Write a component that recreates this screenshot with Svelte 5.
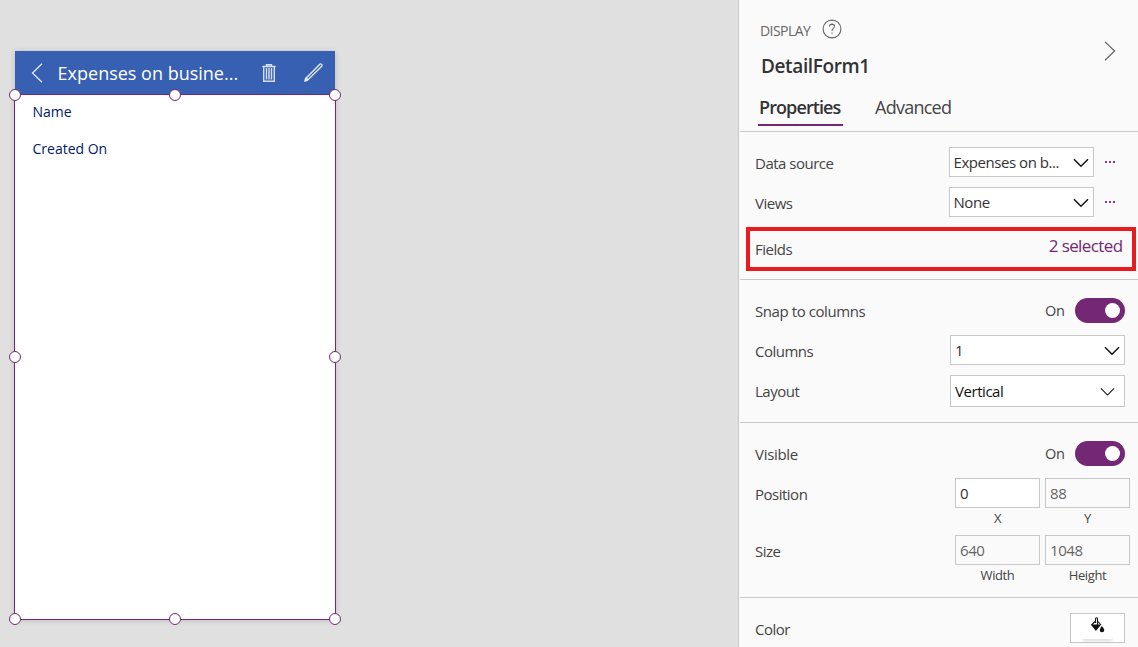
<script>
  const handles = ['tl', 'tc', 'tr', 'ml', 'mr', 'bl', 'bc', 'br'];
</script>

{#snippet chevron(kind)}
  <svg class="chev {kind}" width="16" height="10" viewBox="0 0 16 10"><path d="M1 1.2 8 8.2 15 1.2" /></svg>
{/snippet}

{#snippet toggle()}
  <div class="toggle-wrap"><span class="on">On</span><span class="toggle"><i></i></span></div>
{/snippet}

{#snippet field(value, caption, editable)}
  <div class="field">
    <div class="input" class:editable><span>{value}</span></div>
    <span class="caption">{caption}</span>
  </div>
{/snippet}

<div class="app">
  <main class="canvas">
    <div class="phone">
      <header class="bar">
        <svg class="back" width="12" height="20" viewBox="0 0 12 20"><path d="M11 .8 1.5 10 11 19.2" /></svg>
        <span class="title">Expenses on busine...</span>
        <svg class="trash" width="14" height="18" viewBox="0 0 14 18">
          <path d="M.3 2.5H13.7M4.5 2V.8H9.5V2" />
          <path d="M1.7 3V17.3H12.3V3" />
          <path class="thin" d="M4.5 4V15.5M7 4V15.5M9.5 4V15.5" />
        </svg>
        <svg class="pencil" width="19" height="19" viewBox="0 0 19 19">
          <path d="M.9 18.1 1.5 15.7 15.8 1.3Q16.7.5 17.6 1.4 18.5 2.3 17.7 3.2L3.3 17.5Z" />
          <path class="tip" d="M.9 18.1 1.5 15.7 2.7 14.5 4.5 16.3 3.3 17.5Z" />
        </svg>
      </header>
      <div class="form">
        <div class="card">Name</div>
        <div class="card">Created On</div>
        <div class="selection">
          {#each handles as h}<i class="handle {h}"></i>{/each}
        </div>
      </div>
    </div>
  </main>

  <aside class="panel">
    <div class="head">
      <div class="head-text">
        <div class="kind">
          <span class="display">DISPLAY</span>
          <svg width="20" height="20" viewBox="0 0 20 20">
            <circle cx="10" cy="10" r="8.9" />
            <path d="M7.5 7.4Q7.6 5.1 10 5.1 12.5 5.2 12.5 7.3 12.5 8.5 11.3 9.4 10 10.4 10 11.9" />
            <path d="M10 13.4V14.8" />
          </svg>
        </div>
        <div class="name">DetailForm1</div>
      </div>
      <svg class="expand" width="12" height="20" viewBox="0 0 12 20"><path d="M1 .9 10.6 10 1 19.3" /></svg>
    </div>
    <nav class="tabs">
      <span class="tab active">Properties</span>
      <span class="tab">Advanced</span>
    </nav>

    <section class="data">
      <div class="row">
        <span class="label">Data source</span>
        <div class="source"><div class="select"><span>Expenses on b...</span>{@render chevron('bold')}</div><span class="dots"><i></i><i></i><i></i></span></div>
      </div>
      <div class="row">
        <span class="label">Views</span>
        <div class="source"><div class="select"><span>None</span>{@render chevron('bold')}</div><span class="dots"><i></i><i></i><i></i></span></div>
      </div>
      <div class="fields">
        <span class="label">Fields</span>
        <span class="selected">2 selected</span>
      </div>
    </section>

    <section class="layout">
      <div class="row"><span class="label snap">Snap to columns</span>{@render toggle()}</div>
      <div class="row"><span class="label">Columns</span><div class="select wide"><span>1</span>{@render chevron('bold')}</div></div>
      <div class="row"><span class="label">Layout</span><div class="select wide tall"><span>Vertical</span>{@render chevron('light')}</div></div>
    </section>

    <section class="geometry">
      <div class="row"><span class="label visible">Visible</span>{@render toggle()}</div>
      <div class="row pair"><span class="label">Position</span><div class="fieldset">{@render field('0', 'X', true)}{@render field('88', 'Y', false)}</div></div>
      <div class="row pair"><span class="label">Size</span><div class="fieldset">{@render field('640', 'Width', false)}{@render field('1048', 'Height', false)}</div></div>
    </section>

    <section class="color">
      <div class="row">
        <span class="label">Color</span>
        <div class="swatch">
          <svg width="15" height="16" viewBox="0 0 15 16">
            <path class="line" d="M5.5 6V2.4Q5.5.8 6.8.8 7.5.8 7.5 2.4V8M5 4.5 1.5 8M8 4.5 11 8" />
            <path d="M.8 7.6H11.2L5.9 14ZM11.8 9Q14.3 11.6 14.3 13A2.3 2.3 0 0 1 9.7 13Q9.7 11.6 11.8 9Z" />
          </svg>
          <i></i>
        </div>
      </div>
    </section>
  </aside>
</div>

<style>
  :global(body) { overflow: hidden; }
  .app, .app * { box-sizing: border-box; }
  .app { display: flex; width: 1138px; height: 647px; overflow: hidden; background: #e0e0e0; font: 15px/20px "Open Sans", "Noto Sans", sans-serif; color: #444; white-space: nowrap; }
  svg { fill: none; display: block; flex: none; }
  .canvas { width: 738px; flex: none; padding: 51px 0 0 15px; }
  .phone { width: 320px; height: 568px; display: flex; flex-direction: column; background: #fff; box-shadow: 0 1px 6px rgba(0, 0, 0, .18); }
  .bar { height: 43px; flex: none; background: #3860b2; color: #fff; display: flex; align-items: center; padding: 1px 12px 0 16px; }
  .bar svg { stroke: #e7edf8; stroke-width: 1.2; }
  .title { font-size: 18px; line-height: 24px; width: 187.4px; margin-left: 14.6px; }
  .bar .trash { margin-left: 17px; stroke: #d5dff2; stroke-width: 1.4; }
  .bar .pencil { margin-left: auto; stroke-width: 1.3; margin-top: -1px; }
  .pencil .tip { fill: #e7edf8; stroke: none; }
  .form { position: relative; flex: 1; padding: 8px 17.5px; color: #002065; font-size: 14px; }
  .card { height: 37px; }
  .selection { position: absolute; inset: 0 -1px -1px; border: 1px solid #742774; }
  .handle { position: absolute; width: 12px; height: 12px; border: 1px solid #742774; border-radius: 50%; background: #fff; }
  .tl, .tc, .tr { top: -6px; }
  .bl, .bc, .br { bottom: -6px; }
  .ml, .mr { top: 256px; }
  .tl, .ml, .bl { left: -6px; }
  .tc, .bc { left: 154px; }
  .tr, .mr, .br { right: -6px; }

  .panel { width: 400px; flex: none; border-left: 1px solid #c8c8c8; padding-left: 1px; background: #fafafa; }
  .head { display: flex; justify-content: space-between; height: 84px; padding: 19px 22px 0 20px; }
  .kind { display: flex; align-items: center; gap: 11px; height: 21px; }
  .display { font-size: 14px; letter-spacing: -.55px; color: #666; width: 50px; padding-top: 2px; }
  .kind svg { stroke: #666; stroke-width: 1.1; margin: -1px 0 0 .5px; }
  .name { font-size: 19px; line-height: 26px; font-weight: 600; color: #333; margin: 13px 0 0 1px; letter-spacing: -.38px; }
  .expand { margin-top: 22px; stroke: #666; stroke-width: 1.3; }
  .tabs { height: 48px; border-bottom: 1px solid #c8c8c8; display: flex; gap: 32px; padding-left: 18px; font-size: 18px; line-height: 24px; }
  .tab { height: 42px; padding-top: 11px; letter-spacing: -.75px; }
  .active { width: 85px; padding-left: 1px; border-bottom: 2px solid #742774; font-weight: 600; color: #333; letter-spacing: -.9px; }
  section { border-bottom: 1px solid #c8c8c8; padding-left: 15px; }
  .row { display: flex; justify-content: space-between; align-items: center; height: 40px; }
  .label { padding-top: 2px; letter-spacing: -.5px; }
  .snap { letter-spacing: -.42px; }
  .visible { letter-spacing: -.3px; }
  .data { height: 148px; padding-top: 10px; }
  .source { display: flex; align-items: center; width: 189px; }
  .select { display: flex; align-items: center; justify-content: space-between; width: 145px; height: 30px; padding: 0 4.5px 0 3.5px; border: 1px solid #c8c8c8; background: #fff; color: #333; letter-spacing: -.45px; }
  .select.wide { width: 175px; margin-right: 13px; padding-left: 4px; }
  .select.tall { height: 32px; color: #111; padding-right: 9px; }
  .chev { stroke: #111; stroke-width: 1.5; margin-top: 1px; }
  .light { stroke-width: 1.1; width: 15px; }
  .dots { display: flex; gap: 2px; margin-left: 11px; }
  .dots i { width: 2px; height: 2px; background: #843a84; }
  .fields { display: flex; justify-content: space-between; width: 390px; height: 44px; margin: 5px 0 0 -9px; border: 4px solid #e81b1f; padding: 6px 9.5px 0 5px; }
  .selected { color: #742774; font-size: 17px; line-height: 18px; letter-spacing: -.6px; }
  .layout { height: 143px; padding-top: 10px; }
  .toggle-wrap { display: flex; align-items: center; margin-right: 13px; }
  .on { width: 30px; letter-spacing: -.3px; font-size: 14.5px; padding-top: 1px; }
  .toggle { width: 50px; height: 25px; border-radius: 13px; background: #742774; padding: 5px; display: flex; justify-content: flex-end; }
  .toggle i { width: 15px; height: 15px; border-radius: 50%; background: #fff; }
  .layout .row:nth-child(3) { height: 42px; }
  .layout .row:nth-child(3) .label { padding-top: 0; }
  .geometry { height: 175px; padding-top: 10px; }
  .pair { height: 57px; align-items: flex-start; padding-top: 5px; }
  .pair .label { padding-top: 6px; }
  .fieldset { display: flex; gap: 5px; margin-right: 8px; }
  .field { width: 85px; display: flex; flex-direction: column; align-items: center; }
  .input { width: 85px; height: 30px; border: 1px solid #c8c8c8; padding: 4px; color: #666; letter-spacing: -.45px; }
  .editable { background: #fff; color: #333; }
  .caption { font-size: 13px; letter-spacing: -.4px; line-height: 20px; }
  .color { padding-top: 10px; }
  .swatch { width: 55px; height: 30px; margin-right: 13px; border: 1px solid #c8c8c8; background: #fff; display: flex; flex-direction: column; align-items: center; padding-top: 3px; }
  .swatch svg { fill: #111; }
  .swatch .line { fill: none; stroke: #111; stroke-width: 1.1; }
  .swatch i { width: 29px; height: 3px; margin-top: 3px; background: #fff; box-shadow: 0 2px 3px rgba(0, 0, 0, .15); }
</style>
